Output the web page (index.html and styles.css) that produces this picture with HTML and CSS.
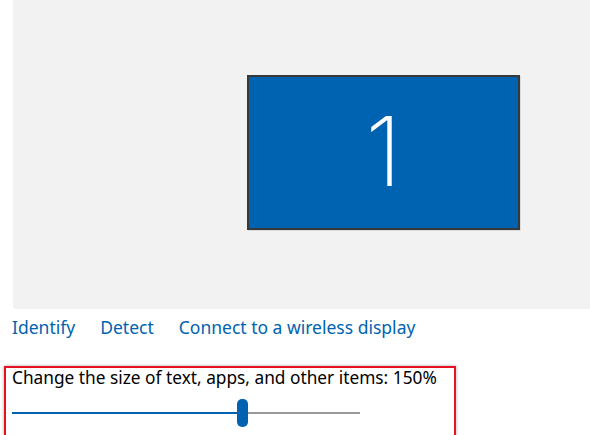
FILE: index.html
```html
<!DOCTYPE html>
<html lang="en">
<head>
  <meta charset="UTF-8">
  <title>Display</title>
  <link rel="stylesheet" href="styles.css">
</head>
<body>
  <div class="arrange">
    <div class="monitor"><span>1</span></div>
  </div>
  <div class="links">
    <a href="#">Identify</a>
    <a href="#">Detect</a>
    <a href="#">Connect to a wireless display</a>
  </div>
  <div class="scale">
    <div class="scale-label">Change the size of text, apps, and other items: 150%</div>
    <div class="slider">
      <div class="fill"></div>
      <div class="thumb"></div>
      <div class="rest"></div>
    </div>
  </div>
</body>
</html>
```

FILE: styles.css
```css
body { margin: 0; background: #fff; font-family: "Noto Sans", "Liberation Sans", sans-serif; overflow: hidden; }
.arrange { margin-left: 13px; height: 309px; background: #f2f2f2; border-radius: 0 0 0 3px; padding: 75px 0 0 234px; box-sizing: border-box; }
.monitor { width: 273px; height: 155px; box-sizing: border-box; background: #0063b1; border: 2px solid #383838; box-shadow: 1px 1px 0 #dcdcdc; display: flex; align-items: center; justify-content: center; }
.monitor span { color: #fff; font-family: Inter, "Noto Sans", sans-serif; font-weight: 200; font-size: 96px; line-height: 1; margin-top: -4px; }
.links { display: flex; gap: 25px; padding: 8px 0 0 12px; font-size: 17.5px; line-height: 20px; }
.links a { color: #0063b1; text-decoration: none; }
.scale { margin: 29px 0 0 4px; width: 452px; height: 72px; box-sizing: border-box; border: 2px solid #e81123; box-shadow: 0 0 3px rgba(0,0,0,0.35); padding: 0 0 0 6px; }
.scale-label { font-size: 17.3px; line-height: 20px; color: #000; }
.slider { display: flex; align-items: center; width: 348px; height: 28px; margin-top: 11px; }
.fill { width: 225px; height: 2px; background: #0063b1; }
.thumb { width: 11px; height: 28px; border-radius: 5px; background: #0063b1; }
.rest { flex: 1; height: 2px; background: #999; }
```
